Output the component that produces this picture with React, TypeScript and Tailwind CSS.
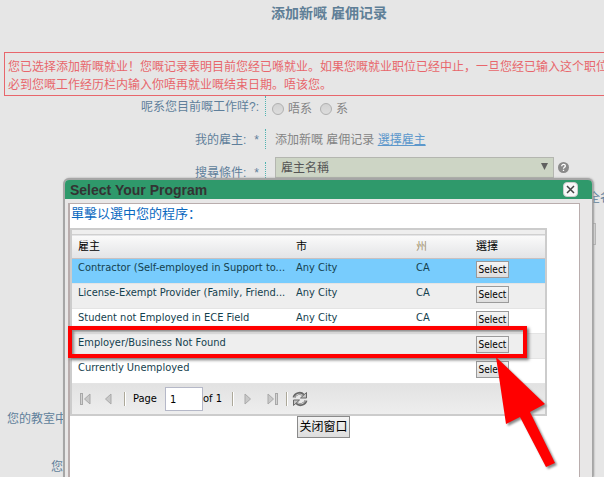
import type { ReactNode } from "react";

const programs = [
  { name: "Contractor (Self-employed in Support to...", city: "Any City", state: "CA" },
  { name: "License-Exempt Provider (Family, Friend...", city: "Any City", state: "CA" },
  { name: "Student not Employed in ECE Field", city: "Any City", state: "CA" },
  { name: "Employer/Business Not Found", city: "", state: "" },
  { name: "Currently Unemployed", city: "", state: "" },
];

const rowColors = ["bg-[#78ccfd]", "bg-[#eeeeee]", "bg-white", "bg-[#eeeeee]", "bg-white"];

type FormRowProps = { label: string; required?: boolean; htmlFor?: string; children: ReactNode };

const FormRow = ({ label, required, htmlFor, children }: FormRowProps) => (
  <div className="flex h-[33px] items-start">
    <label
      htmlFor={htmlFor}
      className="h-5 w-[266px] shrink-0 border-r border-dotted border-[#4fb3b0] pr-1.5 text-right leading-[22px] text-[#5f7f9b]"
    >
      {label}
      {required && <span className="ml-2">*</span>}
    </label>
    {children}
  </div>
);

const Radio = ({ label, value }: { label: string; value: string }) => (
  <label className="flex items-center gap-1">
    <input
      type="radio"
      name="current"
      value={value}
      className="size-3 appearance-none rounded-full border border-[#b0b0b0] bg-linear-to-b from-[#d2d2d2] to-[#dddddd]"
    />
    {label}
  </label>
);

const Separator = () => <span className="h-3.5 w-0.5 border-r border-l border-r-white border-l-[#aca899]" />;

const PagerArrow = ({ title, bar, flip }: { title: string; bar?: boolean; flip?: boolean }) => (
  <button type="button" aria-label={title} className="flex">
    <svg width={bar ? 11 : 7} height="12" viewBox={bar ? "0 0 11 12" : "4 0 7 12"} className={flip ? "-scale-x-100" : ""}>
      {bar && <rect x="0.5" y="0.5" width="2" height="11" fill="#d2d2d2" stroke="#a8a8a8" />}
      <path d="M10 1v10L4.500 6z" fill="#c8c8c8" stroke="#a9a9a9" />
    </svg>
  </button>
);

const Pager = () => (
  <div className="flex h-[30px] items-center bg-linear-to-b from-[#e2e2e2] to-[#eeeeee] pl-2 text-[11px] text-black">
    <PagerArrow title="First page" bar />
    <span className="w-3.5" />
    <PagerArrow title="Previous page" />
    <span className="w-3" />
    <Separator />
    <label htmlFor="page" className="w-[39px] pl-[7px]">
      Page
    </label>
    <input
      id="page"
      defaultValue="1"
      className="h-6 w-[38px] border border-[#b5b8c8] bg-white px-1 text-[11px] text-black"
    />
    <span className="w-[29px] whitespace-nowrap">of 1</span>
    <Separator />
    <span className="w-2.5" />
    <PagerArrow title="Next page" flip />
    <span className="w-4" />
    <PagerArrow title="Last page" bar flip />
    <span className="w-2" />
    <Separator />
    <button type="button" aria-label="Refresh" className="ml-1">
      <svg width="16" height="16" viewBox="0 0 16 16" fill="none">
        <path d="M2 6.500C3 2.500 8.500 1 11.500 4" stroke="#686868" strokeWidth="3" />
        <path d="M14 9.500C13 13.500 7.500 15 4.500 12" stroke="#686868" strokeWidth="3" />
        <path d="M2.500 6.500C4 3 8 2 11 4.500M13.500 9.500C12 13 8 14 5 11.500" stroke="#d0d0d0" />
        <path d="M14.500 1.500v5.500H8.500zM1.500 14.500V9h6z" fill="#c4c4c4" stroke="#686868" />
      </svg>
    </button>
  </div>
);

const ProgramTable = () => (
  <div className="mr-8 border-2 border-[#cccccc] bg-[#eeeeee] pt-1 font-['DejaVu_Sans_Condensed','DejaVu_Sans','Noto_Sans_CJK_TC',sans-serif]">
    <table className="w-full table-fixed border-collapse text-left text-[11px] text-[#14414e]">
      <colgroup>
        <col />
        <col className="w-[120px]" />
        <col className="w-[60px]" />
        <col className="w-[75px]" />
      </colgroup>
      <thead>
        <tr className="h-6 border-t border-b border-t-[#d0d0d0] border-b-[#c8c0c0] bg-linear-to-b from-[#fafafa] to-[#e3e4e6] leading-4 text-black">
          <th className="px-1.5 font-normal">雇主</th>
          <th className="px-1.5 font-normal">市</th>
          <th className="px-1.5 font-normal text-[#a49370]">州</th>
          <th className="px-1.5 font-normal">選擇</th>
        </tr>
      </thead>
      <tbody>
        {programs.map((program, i) => (
          <tr key={program.name} className={`h-[25px] border-b border-[#e4e4e4] align-top ${rowColors[i]}`}>
            <td className="pt-px pl-1.5 leading-4 whitespace-nowrap">{program.name}</td>
            <td className="px-1.5 pt-px leading-4">{program.city}</td>
            <td className="px-1.5 pt-px leading-4">{program.state}</td>
            <td className="px-1.5 pt-0.5">
              <button
                type="button"
                className="flex h-[17px] w-[33px] items-center justify-center border border-[#9a9a9a] bg-linear-to-b from-[#f5f5f5] to-[#dedede] text-[10px] text-black"
              >
                Select
              </button>
            </td>
          </tr>
        ))}
      </tbody>
    </table>
    <Pager />
  </div>
);

const ProgramDialog = () => (
  <section
    role="dialog"
    aria-label="Select Your Program"
    className="absolute top-[178px] right-[11px] bottom-0 left-[63px] flex flex-col rounded-t-md border-t-2 border-r border-l-2 border-[#a6a6a6] bg-[#e8e7e7] shadow-[1px_0_2px_#999]"
  >
    <header className="flex h-[19px] shrink-0 items-center justify-between rounded-t-sm bg-[#2f996b] pr-3.5 pl-[5px]">
      <h2 className="font-['Liberation_Sans',sans-serif] text-sm font-bold text-[#333333]">Select Your Program</h2>
      <button
        type="button"
        aria-label="Close"
        className="flex size-[15px] items-center justify-center rounded-sm border border-[#cccccc] bg-[#f8f8f8]"
      >
        <svg width="9" height="9" viewBox="0 0 9 9">
          <path d="M1 1l7 7M8 1L1 8" stroke="#444" strokeWidth="1.500" />
        </svg>
      </button>
    </header>
    <div className="mt-1 mr-3 ml-[3px] flex-1 border-t border-r border-l-2 border-[#b9adad] bg-white">
      <p className="h-6 pl-px text-[13px] leading-5 text-[#0b69bf]">單擊以選中您的程序：</p>
      <ProgramTable />
      <div className="pr-0.5 text-center">
        <button
          type="button"
          className="h-[22px] w-[53px] border border-[#8a8a8a] bg-linear-to-b from-[#f4f4f4] to-[#dddddd] text-xs text-black"
        >
          关闭窗口
        </button>
      </div>
    </div>
  </section>
);

const Annotations = () => (
  <>
    <div className="pointer-events-none absolute top-[326px] right-[77px] left-[68px] h-8 border-4 border-[#ff0000] shadow-[2px_2px_3px_#777,inset_2px_2px_3px_#888]" />
    <svg
      width="72"
      height="118"
      viewBox="0 0 72 118"
      className="pointer-events-none absolute top-[356px] right-[37px] drop-shadow-[2px_2px_1px_#888]"
    >
      <path d="M1 1L50 48L35 56L60 107L51 111L25 61L11 68Z" fill="#ff0000" />
    </svg>
  </>
);

export default function App() {
  return (
    <div className="relative h-screen overflow-hidden bg-[#e6e6e6] font-['Liberation_Sans','Noto_Sans_CJK_SC',sans-serif] text-xs text-[#848484]">
      <main>
        <h1 className="h-[52px] pt-[5px] pl-[54px] text-center text-sm leading-4 font-bold text-[#5f7f97]">
          添加新嘅 雇佣记录
        </h1>
        <p className="-mr-2 ml-1 h-11 border border-[#e8666c] py-[5px] pl-[3px] leading-[18px] whitespace-nowrap text-[#e8666c]">
          您已选择添加新嘅就业！您嘅记录表明目前您经已喺就业。如果您嘅就业职位已经中止，一旦您经已输入这个职位
          <br />
          必到您嘅工作经历栏内输入你唔再就业嘅结束日期。唔该您。
        </p>
        <form>
          <FormRow label="呢系您目前嘅工作咩?:">
            <div className="flex gap-2 pt-[5px] pl-1.5">
              <Radio label="唔系" value="no" />
              <Radio label="系" value="yes" />
            </div>
          </FormRow>
          <FormRow label="我的雇主:" required>
            <p className="pl-[9px] leading-[22px]">
              添加新嘅 雇佣记录{" "}
              <a href="#employer" className="text-[#5d98cc] underline">
                選擇雇主
              </a>
            </p>
          </FormRow>
          <FormRow label="搜尋條件:" required htmlFor="criteria">
            <div className="-mt-[5px] flex flex-1 items-center pr-[35px] pl-[9px]">
              <div className="relative flex-1">
                <select
                  id="criteria"
                  className="block h-[21px] w-full appearance-none border border-[#b4b6b0] bg-[#cdd5c5] pl-[5px] text-xs text-[#555555]"
                >
                  <option>雇主名稱</option>
                </select>
                <svg width="7" height="7" viewBox="0 0 7 7" className="pointer-events-none absolute top-1.5 right-1.5">
                  <path d="M0 0h7L3.500 7z" fill="#606060" />
                </svg>
              </div>
              <svg width="11" height="11" viewBox="0 0 11 11" className="ml-1 shrink-0">
                <circle cx="5.500" cy="5.500" r="5.500" fill="#8a8a8a" />
                <path d="M3.700 4.300C3.700 1.700 7.500 1.900 7.300 4.100C7.200 5.400 5.500 5.200 5.500 6.700M5.500 7.700v1.300" fill="none" stroke="#fff" strokeWidth="1.300" />
              </svg>
            </div>
          </FormRow>
          <p className="-mr-2 h-7 text-right leading-[6px] whitespace-nowrap text-[#5f7f9b]">全名</p>
          <div className="mr-2 ml-[274px]">
            <input aria-label="全名" className="h-[22px] w-full border border-[#b8b8b8] bg-[#e2e2e2]" />
          </div>
          <p className="mt-[164px] pl-[7px] leading-5 text-[#5f7f9b]">您的教室中</p>
          <p className="mt-7 pl-[51px] leading-5 text-[#5f7f9b]">您</p>
        </form>
      </main>
      <ProgramDialog />
      <Annotations />
    </div>
  );
}
